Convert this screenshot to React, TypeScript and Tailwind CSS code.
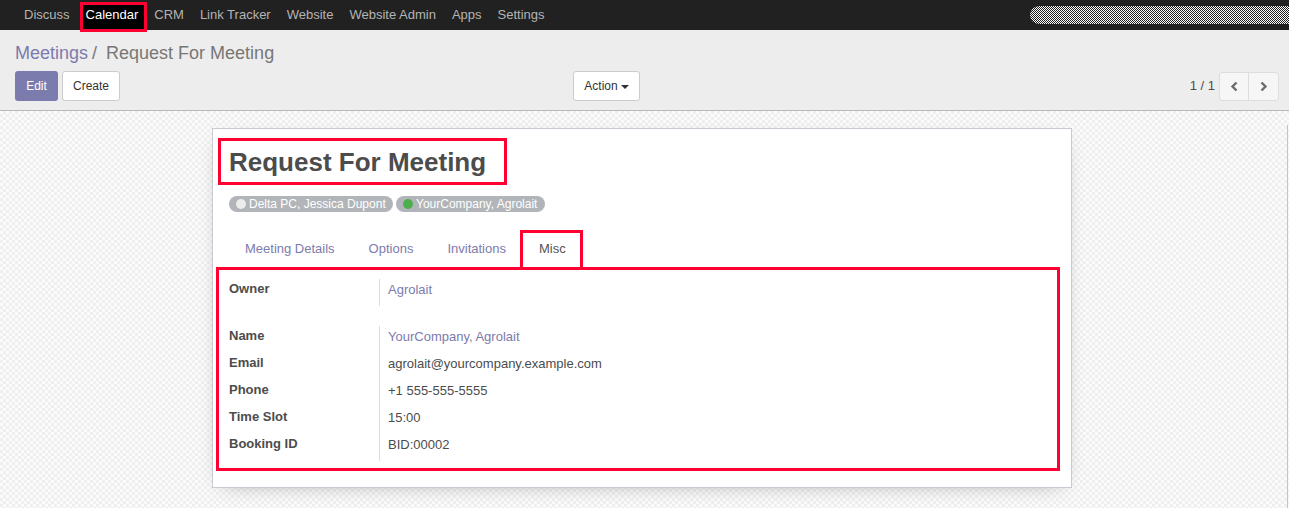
import React from 'react';

const menus = ['Discuss', 'Calendar', 'CRM', 'Link Tracker', 'Website', 'Website Admin', 'Apps', 'Settings'];

const tabs = ['Meeting Details', 'Options', 'Invitations', 'Misc'];

const contactRows = [
  { label: 'Name', value: 'YourCompany, Agrolait', link: true },
  { label: 'Email', value: 'agrolait@yourcompany.example.com' },
  { label: 'Phone', value: '+1 555-555-5555' },
  { label: 'Time Slot', value: '15:00' },
  { label: 'Booking ID', value: 'BID:00002' },
];

function Field({ label, value, link }: { label: string; value: string; link?: boolean }) {
  return (
    <>
      <div className="h-[27px] pt-[1px] font-bold leading-[18px] text-[#4c4c4c]">{label}</div>
      <div
        className={`h-[27px] border-l border-[#dcdcdc] pl-[8px] pt-[2px] leading-[18px] ${
          link ? 'text-[#7c7bad]' : 'text-[#4c4c4c]'
        }`}
      >
        {value}
      </div>
    </>
  );
}

function Chevron({ dir }: { dir: 'left' | 'right' }) {
  return (
    <svg width="9" height="11" viewBox="0 0 9 11" fill="none">
      <path
        d={dir === 'left' ? 'M6.5 1.5 2.5 5.5 6.5 9.5' : 'M2.5 1.5 6.5 5.5 2.5 9.5'}
        stroke="#6b6b6b"
        strokeWidth={2.4}
      />
    </svg>
  );
}

export default function App() {
  return (
    <div className="w-[1289px] h-[508px] overflow-hidden bg-white font-['Liberation_Sans',Arial,sans-serif] text-[13px]">
      {/* Top navbar */}
      <header className="relative z-10 flex h-[30px] items-start bg-[#212121] pl-[16px]">
        {menus.map((m) =>
          m === 'Calendar' ? (
            <div
              key={m}
              className="-mr-[1px] ml-[2px] mt-[2px] flex h-[30px] items-center border-[3px] border-[#ff0033] bg-black pb-[4px] pl-[3px] pr-[6px] text-white"
            >
              {m}
            </div>
          ) : (
            <div key={m} className="flex h-[30px] items-center px-[8px] text-[#b4b4b4]">
              {m}
            </div>
          )
        )}
        <div className="ml-auto mt-[6px] h-[18px] w-[259px] rounded-l-full bg-[repeating-conic-gradient(#ffffff_0_25%,#1c1c1c_0_50%)] bg-size-[2px_2px]" />
      </header>

      {/* Control panel */}
      <div className="h-[81px] border-b border-[#b9b9b9] bg-[#eeeded] pl-[15px] pr-[10px] pt-[11px]">
        <div className="flex h-[24px] items-center text-[18px] leading-[24px]">
          <span className="text-[#7c7bad]">Meetings</span>
          <span className="ml-[4px] text-[#777777]">/</span>
          <span className="ml-[9px] text-[#777777]">Request For Meeting</span>
        </div>
        <div className="mt-[6px] flex items-center">
          <div className="flex w-[558px] gap-[4px] text-[12px]">
            <button className="h-[30px] w-[43px] rounded-[3px] bg-[#7c7bad] text-white">Edit</button>
            <button className="h-[30px] w-[58px] rounded-[3px] border border-[#cccccc] bg-white text-[#333333]">
              Create
            </button>
          </div>
          <button className="flex h-[30px] w-[67px] items-center justify-center gap-[3px] rounded-[3px] border border-[#cccccc] bg-white text-[12px] text-[#333333]">
            Action
            <span className="mt-[1px] h-0 w-0 border-x-[4px] border-t-[4px] border-x-transparent border-t-[#333333]" />
          </button>
          <div className="ml-auto flex items-center">
            <span className="mr-[4px] text-[#4c4c4c]">1 / 1</span>
            <div className="flex h-[29px] overflow-hidden rounded-[3px] border border-[#dddddd] bg-[#f6f6f6]">
              <button className="flex w-[29px] items-center justify-center border-r border-[#dddddd]">
                <Chevron dir="left" />
              </button>
              <button className="flex w-[29px] items-center justify-center">
                <Chevron dir="right" />
              </button>
            </div>
          </div>
        </div>
      </div>

      {/* Content area */}
      <div className="flex h-[397px] bg-[repeating-conic-gradient(#efefef_0_25%,#fbfbfb_0_50%)] bg-size-[6px_6px]">
        <div className="flex-1 pt-[17px]">
          <div className="ml-[212px] w-[860px] border border-[#c9c9d2] bg-white pb-[16px] pt-[9px] shadow-[0_5px_20px_-12px_rgba(0,0,0,0.45)]">
            {/* Title */}
            <div className="ml-[5px] flex h-[47px] w-[289px] items-center border-[3px] border-[#ff0033] pl-[8px]">
              <h1 className="text-[26px] font-bold leading-[30px] text-[#4c4c4c]">Request For Meeting</h1>
            </div>

            {/* Attendee tags */}
            <div className="ml-[16px] mt-[11px] flex gap-[3px] text-[12px] leading-[16px] text-white">
              <span className="flex h-[16px] w-[164px] items-center gap-[3px] rounded-full bg-[#b1b5b9] pl-[7px]">
                <span className="h-[10px] w-[10px] rounded-full bg-[#ececec]" />
                Delta PC, Jessica Dupont
              </span>
              <span className="flex h-[16px] w-[149px] items-center gap-[3px] rounded-full bg-[#b1b5b9] pl-[7px]">
                <span className="h-[10px] w-[10px] rounded-full bg-[#4cae4c]" />
                YourCompany, Agrolait
              </span>
            </div>

            {/* Tabs */}
            <div className="relative z-10 ml-[16px] mt-[18px] flex h-[37px] items-start gap-[2px]">
              {tabs.map((t) =>
                t === 'Misc' ? (
                  <div
                    key={t}
                    className="-ml-[4px] h-[40px] border-[3px] border-[#ff0033] bg-white pl-[16px] pr-[14px] pt-[7px] leading-[18px] text-[#555555]"
                  >
                    {t}
                  </div>
                ) : (
                  <div key={t} className="h-[37px] px-[16px] pt-[10px] leading-[18px] text-[#7c7bad]">
                    {t}
                  </div>
                )
              )}
            </div>

            {/* Misc page */}
            <div className="ml-[3px] h-[204px] w-[844px] border-[3px] border-[#ff0033] pb-[7px] pl-[10px] pt-[9px]">
              <div className="grid grid-cols-[150px_1fr]">
                <Field label="Owner" value="Agrolait" link />
              </div>
              <div className="mt-[20px] grid grid-cols-[150px_1fr]">
                {contactRows.map((r) => (
                  <Field key={r.label} label={r.label} value={r.value} link={r.link} />
                ))}
              </div>
            </div>
          </div>
        </div>
        <div className="mr-[1px] mt-[14px] w-[1px] bg-[#c4c4c4]" />
      </div>
    </div>
  );
}
